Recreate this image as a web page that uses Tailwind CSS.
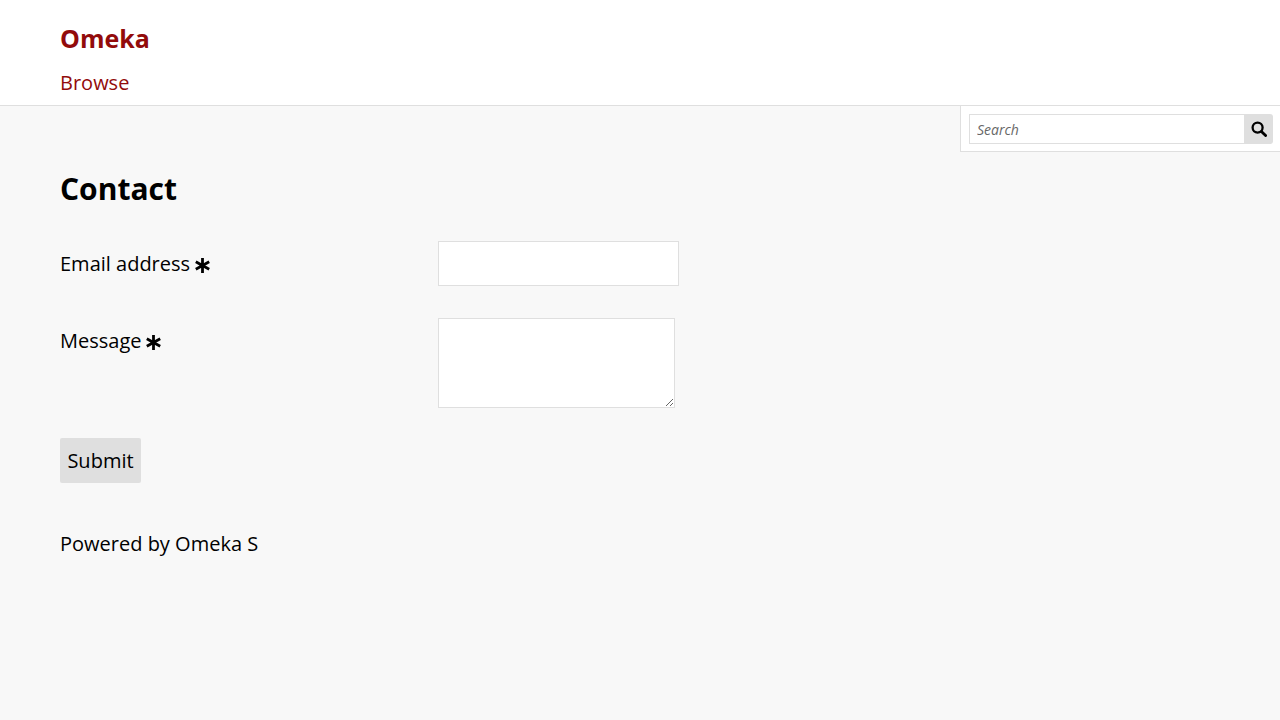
<!DOCTYPE html>
<html><head><script src="https://cdn.jsdelivr.net/npm/@tailwindcss/browser@4"></script></head>
<body class="bg-[#f8f8f8] font-['Open_Sans','Noto_Sans',sans-serif] text-black min-h-[720px] overflow-hidden">
<header class="relative h-[106px] bg-white border-b border-[#dfdfdf] px-[60px]">
<div class="pt-[20px] h-[60px]"><a class="text-[25px] leading-[36px] font-bold text-[#920b0b]">Omeka</a></div>
<nav class="pt-[8px]"><a class="text-[20px] leading-[30px] text-[#920b0b]">Browse</a></nav>
<form class="absolute right-0 top-[105px] w-[320px] h-[47px] bg-white border-l border-b border-t border-[#dfdfdf] py-2 pl-2 flex">
<input placeholder="Search" class="w-[276px] shrink-0 h-[30px] border border-[#dfdfdf] px-[7px] text-[14px] italic text-[#676767] placeholder:text-[#676767] bg-white outline-none">
<button class="w-[28px] shrink-0 h-[30px] bg-[#dfdfdf] rounded-r-[3px] flex items-center justify-center"><svg class="mb-[1px]" width="16" height="16" viewBox="0 0 16 16" fill="none" stroke="#000" stroke-width="2.3"><circle cx="6.6" cy="6.6" r="5"/><path d="M10.4 10.4l4.2 4.2" stroke-linecap="round" stroke-width="2.8"/></svg></button>
</form>
</header>
<main class="px-[60px]">
<h1 class="text-[30px] leading-[44px] font-bold mt-[61px] mb-[30px]">Contact</h1>
<div class="flex h-[45px] mb-[32px]">
<label class="w-[378px] text-[20px] leading-[45px] flex items-start gap-[5px]"><span>Email address</span><svg class="mt-[17px]" width="15" height="15" viewBox="0 0 15 15" stroke="#000" stroke-width="2.8" fill="none"><path d="M7.5 0v15M0.8 3.8l13.4 7.4M14.2 3.8L0.8 11.2"/></svg></label>
<input class="w-[241px] h-[45px] bg-white border border-[#dfdfdf]">
</div>
<div class="flex h-[90px] mb-[30px]">
<label class="w-[378px] text-[20px] leading-[45px] flex items-start gap-[5px]"><span>Message</span><svg class="mt-[17px]" width="15" height="15" viewBox="0 0 15 15" stroke="#000" stroke-width="2.8" fill="none"><path d="M7.5 0v15M0.8 3.8l13.4 7.4M14.2 3.8L0.8 11.2"/></svg></label>
<textarea class="w-[237px] h-[90px] bg-white border border-[#dfdfdf] block resize-y"></textarea>
</div>
<button class="h-[45px] w-[81px] bg-[#dfdfdf] rounded-[2px] text-[20px]">Submit</button>
<p class="text-[20px] leading-[30px] mt-[46px]">Powered by Omeka S</p>
</main>
</body></html>
